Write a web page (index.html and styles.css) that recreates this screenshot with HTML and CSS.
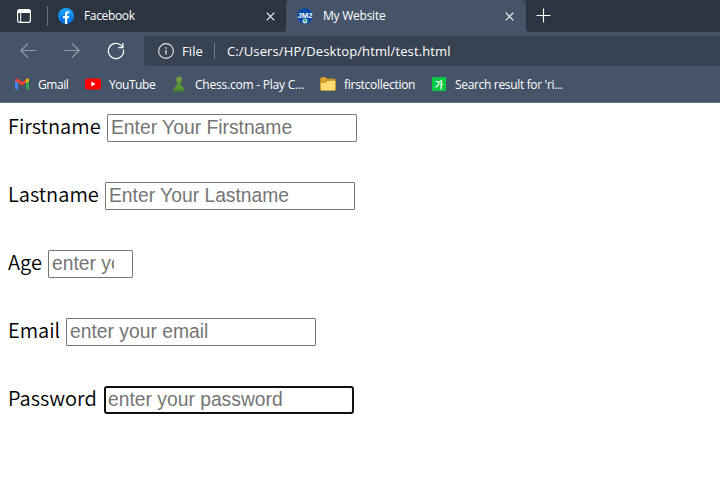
FILE: index.html
```
<!DOCTYPE html>
<html lang="en">
<head>
<meta charset="utf-8">
<title>My Website</title>
<link rel="stylesheet" href="styles.css">
</head>
<body>
<header class="browser">
  <div class="tabs">
    <div class="tab-menu">
      <svg width="14" height="14" viewBox="0 0 14 14" fill="none" stroke="#fff"><rect x=".6" y=".6" width="12.8" height="12.8" rx="2" stroke-width="1.2"/><path d="M1 2.500h12" stroke-width="3"/><path d="M3.700 4v9" stroke-width="1"/></svg>
    </div>
    <div class="tab inactive">
      <svg class="favicon" width="16" height="16" viewBox="0 0 16 16"><defs><linearGradient id="fb" x2="0" y2="1"><stop stop-color="#18acfe"/><stop offset="1" stop-color="#0163e0"/></linearGradient></defs><circle cx="8" cy="8" r="8" fill="url(#fb)"/><path d="M7 16V10.300H5V8h2V6.500C7 4.400 8.100 3.300 10 3.300l1.300.1v1.900h-1C9.500 5.300 9.200 5.800 9.200 6.500V8h2l-.4 2.300H9.200V16z" fill="#fff"/></svg>
      <span class="tab-title facebook">Facebook</span>
      <svg class="close" width="9" height="9" viewBox="0 0 9 9"><path d="M.7.7l7.600 7.600M8.300.7L.7 8.300" stroke="#fff" stroke-width="1.1"/></svg>
    </div>
    <div class="tab active">
      <svg class="favicon" width="16" height="16" viewBox="0 0 16 16"><circle cx="8" cy="8" r="7.700" fill="#0648a8"/><circle cx="8" cy="13" r="2.500" fill="#b8e0ef"/><path d="M6.300 12l2-1 .6 1.500L7.800 14zM9 13.500l1-1v1.500z" fill="#38923e"/><text x="8" y="10" text-anchor="middle" class="badge-text" textLength="15" lengthAdjust="spacingAndGlyphs">JM2</text></svg>
      <span class="tab-title website">My Website</span>
      <svg class="close" width="9" height="9" viewBox="0 0 9 9"><path d="M.7.7l7.600 7.600M8.300.7L.7 8.300" stroke="#fff" stroke-width="1.1"/></svg>
    </div>
    <div class="new-tab">
      <svg width="15" height="15" viewBox="0 0 15 15"><path d="M7.500.5v14M.5 7.500h14" stroke="#fff" stroke-width="1.100"/></svg>
    </div>
  </div>
  <div class="toolbar">
    <svg class="back" width="16" height="16" viewBox="0 0 16 16" fill="none" stroke="#929ba8" stroke-width="1.100"><path d="M8 .5L.8 7.500l7.200 7M1 7.500h15"/></svg>
    <svg class="forward" width="16" height="16" viewBox="0 0 16 16" fill="none" stroke="#929ba8" stroke-width="1.100"><path d="M8 .5l7.200 7-7.200 7M15 7.500H0"/></svg>
    <svg class="reload" width="18" height="18" viewBox="0 0 18 18" fill="none" stroke="#fff" stroke-width="1.250"><path d="M16.400 7.500A7.600 7.600 0 1 1 13.500 2.900L15.800 5M15.900 1v4.700h-4.700"/></svg>
    <div class="address">
      <svg width="16" height="16" viewBox="0 0 16 16" fill="none" stroke="#e1e4e8"><circle cx="8" cy="8" r="7.400" stroke-width="1.100"/><path d="M8 7v4.500M8 4.200v1.500" stroke-width="1.300"/></svg>
      <span class="scheme">File</span>
      <span class="divider"></span>
      <span class="url">C:/Users/HP/Desktop/html/test.html</span>
    </div>
  </div>
  <nav class="bookmarks">
    <a class="bookmark gmail"><svg width="14" height="12" viewBox="0 0 14 12"><path d="M0 2l3 2v7.500H1A1 1 0 0 1 0 10.500z" fill="#4285f4"/><path d="M11 4l3-2v8.500a1 1 0 0 1-1 1h-2z" fill="#34a853"/><path d="M0 2.200C0 .4 1.800-.1 3 .9l4 3.200L11 .9V4.600L7 7.800 3 4.600 0 3z" fill="#ea4335"/><path d="M11 .9c1.200-1 3-.5 3 1.300V3l-3 2z" fill="#fbbc04"/></svg><span>Gmail</span></a>
    <a class="bookmark youtube"><svg width="16" height="12" viewBox="0 0 16 12"><rect y=".5" width="16" height="11" rx="2.500" fill="#f00"/><path d="M6.300 3.600L10.500 6l-4.200 2.400z" fill="#fff"/></svg><span>YouTube</span></a>
    <a class="bookmark chess"><svg width="12" height="16" viewBox="0 0 12 16"><path d="M3 5h6L7.700 6.300c0 2.700 1 3.700 2.300 5 1.500 1 1.800 2.300 1.500 3.900Q6 16.500.5 15.200c-.3-1.600 0-2.900 1.500-3.900 1.300-1.300 2.300-2.300 2.300-5z" fill="#5c9435"/><circle cx="6" cy="3.200" r="2.800" fill="#709f3b"/><path d="M.5 13.500Q6 14 11.500 13.500v1.700Q6 16.500.5 15.200z" fill="#3d7530"/></svg><span>Chess.com - Play C...</span></a>
    <a class="bookmark folder"><svg width="16" height="14" viewBox="0 0 16 14"><path d="M.5 2Q.5.500 2 .5h3.500L7.300 2H14q1.500 0 1.500 1.500v8.500q0 1.500-1.500 1.500H2Q.5 13.500.5 12z" fill="#d9a52b" stroke="#b98a24"/><path d="M.5 5.500h5L7.500 3.500H14q1.500 0 1.500 1v7.500q0 1.500-1.500 1.500H2Q.5 13.500.5 12z" fill="#ffdc75" stroke="#c29a36"/></svg><span>firstcollection</span></a>
    <a class="bookmark search"><svg width="14" height="14" viewBox="0 0 14 14"><path d="M0 0h2v1h1V0h11v14H0z" fill="#05c843"/><text x="7" y="10.500" text-anchor="middle" class="korean">가</text></svg><span>Search result for 'ri...</span></a>
  </nav>
</header>
<main>
  <form>
    <div class="field"><label for="first">Firstname</label><input id="first" type="text" placeholder="Enter Your Firstname"></div>
    <div class="field"><label class="last" for="last">Lastname</label><input id="last" type="text" placeholder="Enter Your Lastname"></div>
    <div class="field"><label class="age-label" for="age">Age</label><input id="age" class="age" type="text" placeholder="enter your age"></div>
    <div class="field"><label class="email-label" for="email">Email</label><input id="email" type="email" placeholder="enter your email"></div>
    <div class="field"><label class="password-label" for="password">Password</label><input id="password" class="focused" type="password" placeholder="enter your password"></div>
  </form>
</main>
</body>
</html>
```
FILE: styles.css
```
* { box-sizing: border-box; }
body { margin: 0; background: #fff; overflow: hidden; font-family: "Open Sans", "Noto Sans", sans-serif; }
svg { display: block; flex: none; }
.browser { height: 103px; background: #455469; color: #fff; border-bottom: 1px solid #6d7887; }
.tabs { display: flex; height: 32px; background: #455469; }
.tab-menu { width: 48px; padding: 9px 0 0 17px; position: relative; background: #2b3541; }
.tab-menu::after { content: ""; position: absolute; right: 0; top: 6px; width: 1px; height: 20px; background: #68717c; }
.tab { display: flex; align-items: center; height: 32px; font-size: 12px; }
.inactive { width: 238px; padding: 0 11px 0 10px; background: #2b3541; border-radius: 0 0 4px 0; }
.active { width: 240px; padding: 0 12px 0 11px; background: #455469; border-radius: 5px 5px 0 0; box-shadow: 0 -1px 2px #202934; }
.tab-title { margin-left: 10px; line-height: 16px; white-space: nowrap; }
.facebook { letter-spacing: -.35px; }
.website { letter-spacing: -.24px; }
.close { margin-left: auto; }
.new-tab { flex: 1; padding: 8px 0 0 10px; background: #2b3541; border-radius: 0 0 0 4px; }
.badge-text { font: bold 6.5px "Liberation Sans", sans-serif; fill: #fff; }
.toolbar { display: flex; align-items: center; height: 38px; padding-left: 20px; }
.forward { margin-left: 28px; }
.reload { margin-left: 27px; }
.address { display: flex; align-items: center; flex: 1; height: 30px; margin-left: 19px; padding-left: 14px; background: #374353; border-radius: 4px 0 0 4px; font-size: 13px; white-space: nowrap; }
.scheme { width: 32px; margin-left: 8px; letter-spacing: .1px; }
.divider { width: 1px; height: 16px; background: #737d89; }
.url { margin-left: 12px; letter-spacing: .12px; }
.bookmarks { display: flex; height: 28px; padding-left: 15px; }
.bookmark { display: flex; align-items: center; flex: none; gap: 9px; font-size: 12px; white-space: nowrap; }
.gmail { width: 70px; letter-spacing: -.42px; }
.youtube { width: 88px; gap: 8px; letter-spacing: -.45px; }
.chess { width: 147px; gap: 10px; letter-spacing: -.22px; }
.folder { width: 112px; gap: 8px; letter-spacing: -.28px; }
.search { letter-spacing: -.33px; }
.korean { font: bold 9px "Noto Sans CJK KR", sans-serif; fill: #fff; letter-spacing: 0; }
main { padding: 11px 8px 0; }
.field { display: flex; height: 68px; }
label { width: 99px; font: 350 20px/28px "Noto Sans CJK KR", sans-serif; color: #000; white-space: nowrap; margin-top: -2px; }
.last { width: 97px; }
.age-label { width: 40px; }
.email-label { width: 58px; }
.password-label { width: 96px; }
input { width: 250px; height: 28px; padding: 1px 3px; border: 1px solid #767676; border-radius: 1px; background: #fff; font: 19.3px "Liberation Sans", Arial, sans-serif; outline: none; }
input::placeholder { color: #757575; opacity: 1; }
.age { width: 85px; padding-right: 18px; }
.focused { border: 2px solid #101010; border-radius: 3px; padding: 0 2px; }
```
